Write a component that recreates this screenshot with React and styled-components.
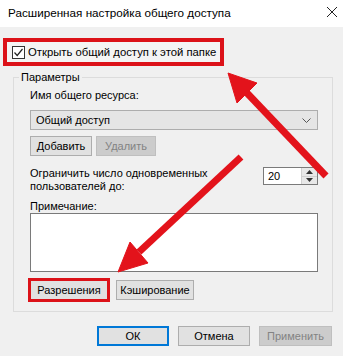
import React from 'react';
import styled, { createGlobalStyle } from 'styled-components';

const GlobalStyle = createGlobalStyle`
  html, body {
    margin: 0;
    padding: 0;
    background: #f0f0f0;
  }
  body {
    font-family: "Liberation Sans", Arial, sans-serif;
    font-size: 11px;
    color: #000;
  }
`;

const Window = styled.div`
  position: relative;
  width: 343px;
  height: 356px;
  background: #f0f0f0;
  overflow: hidden;
  white-space: nowrap;
`;

const TitleBar = styled.div`
  display: flex;
  align-items: center;
  justify-content: space-between;
  height: 27px;
  padding: 0 5px 3px 8px;
  box-sizing: border-box;
  background: #fff;
  font-size: 11.7px;
`;

const Body = styled.div`
  padding: 11px 11px 0 13px;
`;

const Highlight = styled.div`
  display: flex;
  align-items: center;
  gap: 3px;
  width: 221px;
  height: 28px;
  margin-left: -10px;
  padding-left: 5px;
  box-sizing: border-box;
  border: 4px solid #dc1219;
  background: #f4f4f4;
  font-size: 11.3px;
`;

const CheckBox = styled.span`
  display: inline-flex;
  align-items: center;
  justify-content: center;
  flex: none;
  width: 13px;
  height: 13px;
  box-sizing: border-box;
  border: 1px solid #333;
  background: #fff;
`;

const GroupBox = styled.fieldset`
  margin: 3px 0 0;
  width: 320px;
  box-sizing: border-box;
  padding: 2px 14px 11px 16px;
  border: 1px solid #dcdcdc;
`;

const Legend = styled.legend`
  padding: 0 2px;
  margin-left: -11px;
  line-height: 16px;
`;

const Label = styled.div`
  line-height: ${p => p.$lh || 16}px;
  margin-top: ${p => p.$mt || 0}px;
`;

const Select = styled.div`
  display: flex;
  align-items: center;
  justify-content: space-between;
  height: 20px;
  margin-top: 7px;
  padding: 0 6px 0 5px;
  box-sizing: border-box;
  background: #e5e5e5;
  border: 1px solid #adadad;
`;

const ButtonRow = styled.div`
  display: flex;
  gap: ${p => p.$gap || 4}px;
  margin-top: ${p => p.$mt || 0}px;
  justify-content: ${p => (p.$end ? 'flex-end' : 'flex-start')};
`;

const Button = styled.div`
  display: flex;
  align-items: center;
  justify-content: center;
  height: 20px;
  width: ${p => p.$w}px;
  box-sizing: border-box;
  background: ${p => (p.$disabled ? '#cccccc' : '#e1e1e1')};
  color: ${p => (p.$disabled ? '#838383' : '#000')};
  border: ${p => (p.$primary ? '2px solid #0078d7' : p.$disabled ? '1px solid #bfbfbf' : '1px solid #adadad')};
  outline: ${p => (p.$marked ? '3px solid #dc1219' : 'none')};
  outline-offset: -1px;
`;

const LimitRow = styled.div`
  display: flex;
  justify-content: space-between;
  align-items: flex-start;
  margin-top: 11px;
`;

const Spinner = styled.div`
  display: flex;
  width: 55px;
  height: 18px;
  box-sizing: border-box;
  border: 1px solid #7a7a7a;
  background: #fff;
`;

const SpinValue = styled.div`
  flex: 1;
  padding-left: 4px;
  line-height: 16px;
`;

const SpinButtons = styled.div`
  display: flex;
  flex-direction: column;
  width: 15px;
  border-left: 1px solid #d0d0d0;
`;

const SpinButton = styled.div`
  flex: 1;
  display: flex;
  align-items: center;
  justify-content: center;
  background: #e8e8e8;
  border-bottom: ${p => (p.$top ? '1px solid #d0d0d0' : 'none')};
`;

const TextArea = styled.div`
  height: 59px;
  box-sizing: border-box;
  border: 1px solid #7a7a7a;
  background: #fff;
`;

const Footer = styled.div`
  padding: 14px 11px 0 0;
`;

const Overlay = styled.svg`
  position: absolute;
  left: 0;
  top: 0;
  pointer-events: none;
`;

const RED = '#e3131b';

const Arrow = ({ tail, base, tip, left, right }) => (
  <g fill={RED} stroke={RED}>
    <line x1={tail[0]} y1={tail[1]} x2={base[0]} y2={base[1]} strokeWidth="7" />
    <polygon points={`${tip.join(',')} ${left.join(',')} ${right.join(',')}`} strokeWidth="1" strokeLinejoin="round" />
  </g>
);

export default function App() {
  return (
    <>
      <GlobalStyle />
      <Window>
        <TitleBar>
          <span>Расширенная настройка общего доступа</span>
          <svg width="12" height="12" viewBox="0 0 12 12">
            <path d="M1 1 L11 11 M11 1 L1 11" stroke="#222" strokeWidth="1" />
          </svg>
        </TitleBar>
        <Body>
          <Highlight>
            <CheckBox>
              <svg width="11" height="11" viewBox="0 0 11 11">
                <path d="M1.5 5.5 L4.2 8.5 L9.5 2" stroke="#222" strokeWidth="1.2" fill="none" />
              </svg>
            </CheckBox>
            <span>Открыть общий доступ к этой папке</span>
          </Highlight>
          <GroupBox>
            <Legend>Параметры</Legend>
            <Label>Имя общего ресурса:</Label>
            <Select>
              <span>Общий доступ</span>
              <svg width="9" height="5" viewBox="0 0 9 5">
                <path d="M0.5 0.5 L4.5 4.5 L8.5 0.5" stroke="#555" fill="none" />
              </svg>
            </Select>
            <ButtonRow $mt={6}>
              <Button $w={62}>Добавить</Button>
              <Button $w={60} $disabled>Удалить</Button>
            </ButtonRow>
            <LimitRow>
              <Label $lh={13}>
                Ограничить число одновременных
                <br />
                пользователей до:
              </Label>
              <Spinner>
                <SpinValue>20</SpinValue>
                <SpinButtons>
                  <SpinButton $top>
                    <svg width="7" height="4" viewBox="0 0 7 4"><path d="M0 4 L3.5 0 L7 4 Z" fill="#333" /></svg>
                  </SpinButton>
                  <SpinButton>
                    <svg width="7" height="4" viewBox="0 0 7 4"><path d="M0 0 L3.5 4 L7 0 Z" fill="#333" /></svg>
                  </SpinButton>
                </SpinButtons>
              </Spinner>
            </LimitRow>
            <Label $lh={13} $mt={7}>Примечание:</Label>
            <TextArea />
            <ButtonRow $mt={8} $gap={8}>
              <Button $w={78} $marked>Разрешения</Button>
              <Button $w={78}>Кэширование</Button>
            </ButtonRow>
          </GroupBox>
        </Body>
        <Footer>
          <ButtonRow $end $gap={9}>
            <Button $w={72} $primary>ОК</Button>
            <Button $w={72}>Отмена</Button>
            <Button $w={73} $disabled>Применить</Button>
          </ButtonRow>
        </Footer>
        <Overlay width="343" height="356" viewBox="0 0 343 356">
          <Arrow tail={[326, 176]} base={[247, 93]} tip={[228, 73]} left={[257, 83]} right={[237, 103]} />
          <Arrow tail={[241, 157]} base={[139, 252]} tip={[118, 272]} left={[130, 242]} right={[148, 263]} />
        </Overlay>
      </Window>
    </>
  );
}
